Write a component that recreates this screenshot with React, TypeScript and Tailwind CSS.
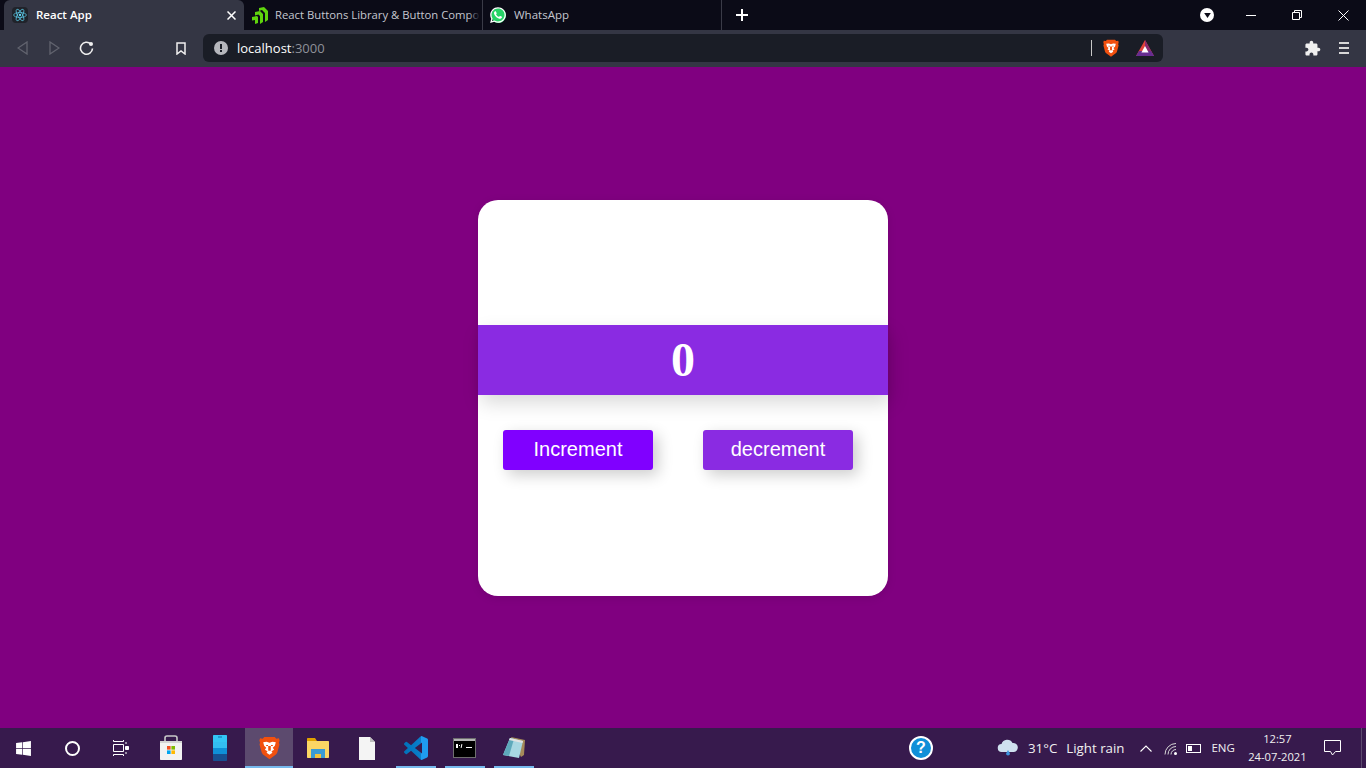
import { FaWhatsapp, FaWindows } from 'react-icons/fa';

const BraveIcon = ({ size = 18 }: { size?: number }) => (
  <svg width={size} height={size * 1.15} viewBox="0 0 20 23">
    <path d="M5 1h10l1.500 1.600L19 2.200l.6 2-.6 2.300.5 1.600-2 7.400c-.4 1.200-1 1.900-2 2.600L10 22.200 4.500 18.100c-1-.7-1.600-1.400-2-2.600l-2-7.400.5-1.600L.4 4.200l.6-2 2.500.4z" fill="#f1500f" />
    <path d="M4 6l3.200-.5L10 6.500l2.800-1L16 6l-.9 3.400-2 1.700 1.300 2.100-2.500 1.300.9 1.500L10 17.800l-2.800-1.800.9-1.500-2.500-1.300 1.300-2.100-2-1.700z" fill="#fff" />
    <path d="M8.800 9.500h2.400v4.500H8.800z" fill="#f1500f" />
    <path d="M6.800 8.500h1.800v1H6.800zM11.400 8.500h1.800v1h-1.800z" fill="#f1500f" />
  </svg>
);

const BatIcon = () => (
  <svg width="18" height="16" viewBox="0 0 18 16">
    <path d="M9 0l9 16H0z" fill="#e0423a" />
    <path d="M9 0l9 16H9z" fill="#8a2a6e" />
    <path d="M0 16l3-5h12l3 5z" fill="#662d91" />
    <path d="M9 6l3.600 6.500H5.400z" fill="#fff" />
  </svg>
);

const ReactIcon = () => (
  <div className="flex h-4 w-4 items-center justify-center rounded-sm bg-[#20232a]">
    <svg width="14" height="14" viewBox="-12 -12 24 24" fill="none" stroke="#61dafb" strokeWidth="1.100">
      <circle r="2" fill="#61dafb" stroke="none" />
      <ellipse rx="11" ry="4.200" />
      <ellipse rx="11" ry="4.200" transform="rotate(60)" />
      <ellipse rx="11" ry="4.200" transform="rotate(120)" />
    </svg>
  </div>
);

const ButtonsLibIcon = () => (
  <svg width="16" height="17" viewBox="0 0 16 17" fill="#5fd40d">
    <path d="M7 1l5-1 4 4v9l-3 2V6l-3-3-3 1z" />
    <path d="M3 5l5-1 3 3v8l-3 2V9L6.500 7.500 3 8.500z" />
    <path d="M0 10l5-1 1 1v6l-3 1v-4l-3 .5z" />
  </svg>
);

const WhatsappIcon = () => (
  <div className="relative flex h-[18px] w-[18px] items-center justify-center">
    <div className="absolute h-[15px] w-[15px] rounded-full bg-[#25d366]" />
    <FaWhatsapp className="relative text-[18px] text-white" />
  </div>
);

const StoreIcon = () => (
  <svg width="24" height="26" viewBox="0 0 24 26">
    <path d="M6 6V3c0-1 1-2 2-2h8c1 0 2 1 2 2v3" fill="none" stroke="#c9c9c9" strokeWidth="1.600" />
    <path d="M1 6h22v18c0 .6-.4 1-1 1H2c-.6 0-1-.4-1-1z" fill="#f2f2f2" />
    <path d="M1 6h22v2H1z" fill="#d4d4d4" />
    <path d="M8 11h3.600v3.600H8z" fill="#f25022" />
    <path d="M12.400 11H16v3.600h-3.600z" fill="#7fba00" />
    <path d="M8 15.400h3.600V19H8z" fill="#00a4ef" />
    <path d="M12.400 15.400H16V19h-3.600z" fill="#ffb900" />
  </svg>
);

const PhoneIcon = () => (
  <svg width="14" height="26" viewBox="0 0 14 26">
    <path d="M1 0h12c.6 0 1 .4 1 1v6H0V1c0-.6.4-1 1-1z" fill="#33c5f5" />
    <path d="M0 7h14v6H0z" fill="#33bdf2" />
    <path d="M0 13h14v6H0z" fill="#0f8fd8" />
    <path d="M0 19h14v6c0 .6-.4 1-1 1H1c-.6 0-1-.4-1-1z" fill="#174f92" />
    <path d="M5 1.500h4v1H5z" fill="#0b6ea8" />
  </svg>
);

const ExplorerIcon = () => (
  <svg width="22" height="20" viewBox="0 0 22 20">
    <path d="M0 1c0-.6.4-1 1-1h7l2 3H0z" fill="#e0a100" />
    <path d="M0 3h21c.6 0 1 .4 1 1v15c0 .6-.4 1-1 1H1c-.6 0-1-.4-1-1z" fill="#fcd664" />
    <path d="M4 11h14v9h-4v-4H8v4H4z" fill="#3b9bd4" />
    <path d="M8 16h6v4H8z" fill="#f5c33b" />
  </svg>
);

const FileIcon = () => (
  <svg width="16" height="23" viewBox="0 0 16 23">
    <path d="M0 0h11l5 5v18H0z" fill="#f4f4f4" />
    <path d="M11 0l5 5h-5z" fill="#bdbdbd" />
  </svg>
);

const VscodeIcon = () => (
  <svg width="24" height="24" viewBox="0 0 24 24">
    <defs>
      <linearGradient id="vscode-fill" x1="0" x2="1" y1="0" y2="0">
        <stop offset="0" stopColor="#0072ba" />
        <stop offset="0.7" stopColor="#0a7fcb" />
        <stop offset="0.72" stopColor="#1f9cf0" />
        <stop offset="1" stopColor="#1f9cf0" />
      </linearGradient>
    </defs>
    <path
      d="M23.150 2.587L18.210.21a1.494 1.494 0 0 0-1.705.29l-9.460 8.630-4.120-3.128a.999.999 0 0 0-1.276.057L.327 7.261A1 1 0 0 0 .326 8.740L3.899 12 .326 15.260a1 1 0 0 0 .001 1.479L1.650 17.940a.999.999 0 0 0 1.276.057l4.120-3.128 9.460 8.630a1.492 1.492 0 0 0 1.704.29l4.942-2.377A1.500 1.500 0 0 0 24 20.060V3.939a1.500 1.500 0 0 0-.85-1.352zm-5.146 14.861L10.826 12l7.178-5.448v10.896z"
      fill="url(#vscode-fill)"
    />
  </svg>
);

const CmdIcon = () => (
  <div className="flex h-[20px] w-[23px] flex-col border border-[#6e6e6e] bg-black">
    <div className="h-[2px] bg-[#b5b5b5]" />
    <div className="mt-[2px] flex items-center gap-[1px] pl-[2px]">
      <div className="h-[4px] w-[2px] bg-white" />
      <div className="h-[1px] w-[1px] bg-white" />
      <div className="h-[4px] w-[1px] rotate-12 bg-white" />
      <div className="mt-[4px] ml-[3px] h-[1px] w-[6px] bg-white" />
    </div>
  </div>
);

const NotepadIcon = () => (
  <svg width="24" height="24" viewBox="0 0 24 24">
    <path d="M9 1l14 3-1 15-3 2z" fill="#a58a5a" />
    <path d="M8 2l13 3-4 17L1 19z" fill="#a8d7e2" />
    <path d="M1 19L8 2l4 1-5 17z" fill="#5ea9bb" />
    <path d="M8 2l13 3-.5 2L7 4z" fill="#e2e2e2" />
  </svg>
);

const tabFont = "font-['Open_Sans','Liberation_Sans',sans-serif] leading-none";

const TabBar = () => (
  <div className="flex h-[30px] items-end bg-[#0b0b17] pl-[4px]">
    <div className="flex h-[30px] w-[240px] items-center rounded-t-md bg-[#343644] pl-[8px]">
      <ReactIcon />
      <span className={`${tabFont} ml-[8px] text-[11.500px] font-semibold text-white`}>React App</span>
      <svg className="mr-[8px] ml-auto" width="9" height="9" viewBox="0 0 9 9" stroke="#fff" strokeWidth="1.500">
        <path d="M.5.500l8 8M8.500.500l-8 8" />
      </svg>
    </div>
    <div className="flex h-[30px] w-[239px] items-center border-r border-[#3a3b47] pl-[8px]">
      <ButtonsLibIcon />
      <div className="relative ml-[7px] flex w-[205px] items-center whitespace-nowrap">
        <span className={`${tabFont} text-[11.300px] text-[#c5c7cf]`}>React Buttons Library &amp; Button Compo</span>
        <div className="absolute inset-y-0 right-0 w-[12px] bg-gradient-to-r from-transparent to-[#0b0b17]" />
      </div>
    </div>
    <div className="flex h-[30px] w-[239px] items-center border-r border-[#3a3b47] pl-[6px]">
      <WhatsappIcon />
      <span className={`${tabFont} ml-[7px] text-[11.500px] text-[#c5c7cf]`}>WhatsApp</span>
    </div>
    <svg className="mb-[9px] ml-[14px]" width="12" height="12" viewBox="0 0 12 12" stroke="#fff" strokeWidth="2">
      <path d="M6 0v12M0 6h12" />
    </svg>
    <div className="ml-auto flex h-[30px] items-center">
      <div className="flex w-[42px] items-center justify-center">
        <div className="flex h-[14px] w-[14px] items-center justify-center rounded-full bg-white">
          <svg width="7" height="5" viewBox="0 0 8 6" fill="#0b0b17">
            <path d="M0 0h8L4 6z" />
          </svg>
        </div>
      </div>
      <div className="flex w-[46px] justify-center">
        <div className="h-px w-[10px] bg-white" />
      </div>
      <div className="flex w-[46px] justify-center">
        <svg width="10" height="10" viewBox="0 0 10 10" fill="none" stroke="#fff">
          <path d="M.5 2.500h7v7h-7zM2.500 2.500v-2h7v7h-2" />
        </svg>
      </div>
      <div className="flex w-[46px] justify-center">
        <svg width="11" height="11" viewBox="0 0 11 11" stroke="#fff">
          <path d="M.5.500l10 10M10.500.500l-10 10" />
        </svg>
      </div>
    </div>
  </div>
);

const Toolbar = () => (
  <div className="flex h-[37px] items-center bg-[#343644] pb-[1px] pl-[6px] pr-[6px]">
    <div className="flex w-[32px] justify-center">
      <svg width="11" height="14" viewBox="0 0 11 14" fill="none" stroke="#62646f" strokeWidth="1.300">
        <path d="M10 1v12L1 7z" />
      </svg>
    </div>
    <div className="flex w-[32px] justify-center">
      <svg width="11" height="14" viewBox="0 0 11 14" fill="none" stroke="#62646f" strokeWidth="1.300">
        <path d="M1 1v12l9-6z" />
      </svg>
    </div>
    <div className="flex w-[32px] justify-center">
      <svg width="15" height="15" viewBox="0 0 15 15" fill="none" stroke="#f0f0f0" strokeWidth="1.600">
        <path d="M11.800 3a6 6 0 1 0 1.700 4.500" />
        <circle cx="12" cy="3" r="2" fill="#f0f0f0" stroke="none" />
      </svg>
    </div>
    <div className="ml-[63px] flex w-[32px] justify-center">
      <svg width="10" height="13" viewBox="0 0 10 13" fill="none" stroke="#f0f0f0" strokeWidth="1.500">
        <path d="M1 1h8v11L5 9l-4 3z" />
      </svg>
    </div>
    <div className="ml-[6px] flex h-[28px] w-[960px] items-center rounded-md bg-[#1a1d26] pl-[11px]">
      <div className="flex h-[14px] w-[14px] items-center justify-center rounded-full bg-[#b6b7bd]">
        <div className="flex flex-col items-center gap-[1px]">
          <div className="h-[5px] w-[2px] bg-[#1a1d26]" />
          <div className="h-[2px] w-[2px] bg-[#1a1d26]" />
        </div>
      </div>
      <span className="ml-[9px] font-['Open_Sans','Liberation_Sans',sans-serif] text-[13px] leading-none text-white">
        localhost<span className="text-[#8f9199]">:3000</span>
      </span>
      <div className="ml-auto h-[16px] w-px bg-[#c8c8c8]" />
      <div className="ml-[10px] flex w-[18px] justify-center">
        <BraveIcon size={16} />
      </div>
      <div className="mr-[9px] ml-[16px] flex w-[18px] justify-center">
        <BatIcon />
      </div>
    </div>
    <div className="ml-auto flex w-[32px] justify-center">
      <svg width="17" height="17" viewBox="0 0 24 24" fill="#f0f0f0">
        <path d="M20.500 11H19V7c0-1.100-.9-2-2-2h-4V3.500C13 2.120 11.880 1 10.500 1S8 2.120 8 3.500V5H4c-1.100 0-1.990.9-1.990 2v3.800H3.500c1.490 0 2.700 1.210 2.700 2.700s-1.210 2.700-2.700 2.700H2V20c0 1.100.9 2 2 2h3.800v-1.500c0-1.490 1.210-2.700 2.700-2.700 1.490 0 2.700 1.210 2.700 2.700V22H17c1.100 0 2-.9 2-2v-4h1.500c1.380 0 2.500-1.120 2.500-2.500S21.880 11 20.500 11z" />
      </svg>
    </div>
    <div className="flex w-[32px] flex-col items-center gap-[3px]">
      <div className="h-[2px] w-[10px] bg-[#d8d8d8]" />
      <div className="h-[2px] w-[10px] bg-[#d8d8d8]" />
      <div className="h-[2px] w-[10px] bg-[#d8d8d8]" />
    </div>
  </div>
);

const Counter = () => (
  <main className="flex flex-1 justify-center bg-[#800080] pt-[133px]">
    <div className="flex h-[396px] w-[410px] flex-col rounded-[20px] bg-white pt-[125px] shadow-[0_2px_10px_rgba(0,0,0,0.1)]">
      <div className="flex h-[70px] items-center justify-center bg-[#8a2be2] shadow-[3px_8px_18px_rgba(0,0,0,0.15)]">
        <span className="font-['Liberation_Serif',serif] text-[48px] leading-none font-bold text-white">0</span>
      </div>
      <div className="mt-[35px] flex gap-[50px] pl-[25px]">
        <button className="h-[40px] w-[150px] rounded-[3px] bg-[#8000ff] pb-[2px] font-['Liberation_Sans',sans-serif] text-[20px] text-white shadow-[5px_5px_15px_rgba(0,0,0,0.2)]">
          Increment
        </button>
        <button className="h-[40px] w-[150px] rounded-[3px] bg-[#8a2be2] pb-[2px] font-['Liberation_Sans',sans-serif] text-[20px] text-white shadow-[5px_5px_15px_rgba(0,0,0,0.2)]">
          decrement
        </button>
      </div>
    </div>
  </main>
);

const TaskbarItem = ({
  children,
  bar,
  active,
  pad = 'pr-[2px]'
}: {
  children?: React.ReactNode;
  bar?: boolean;
  active?: boolean;
  pad?: string;
}) => (
  <div
    className={`relative flex h-[40px] items-center justify-center ${pad} ${
      active ? 'mr-px w-[48px] bg-[#5c4a6e]' : 'w-[49px]'
    }`}
  >
    {children}
    {(bar || active) && (
      <div className={`absolute bottom-0 h-[2px] bg-[#76b9ed] ${active ? 'inset-x-0' : 'right-[5px] left-[4px]'}`} />
    )}
  </div>
);

const trayText = "font-['Open_Sans','Liberation_Sans',sans-serif] text-[#f0f0f0] leading-none";

const Taskbar = () => (
  <div className="flex h-[40px] items-center bg-[#371a4d]">
    <TaskbarItem>
      <FaWindows className="text-[17px] text-white" />
    </TaskbarItem>
    <TaskbarItem pad="pr-[3px]">
      <div className="h-[15px] w-[15px] rounded-full border-2 border-white" />
    </TaskbarItem>
    <TaskbarItem pad="pr-[4px]">
      <svg width="16" height="16" viewBox="0 0 16 16" fill="none" stroke="#fff">
        <path d="M.5 0v1.500h10V0M.5 16v-1.500h10V16M.5 4.500h10v7H.5z" />
        <path d="M13 2v2M13 12v2" />
        <path d="M12.500 6.500h3v3h-3z" fill="#fff" />
      </svg>
    </TaskbarItem>
    <TaskbarItem>
      <StoreIcon />
    </TaskbarItem>
    <TaskbarItem>
      <PhoneIcon />
    </TaskbarItem>
    <TaskbarItem active pad="pr-0">
      <BraveIcon size={21} />
    </TaskbarItem>
    <TaskbarItem>
      <ExplorerIcon />
    </TaskbarItem>
    <TaskbarItem>
      <FileIcon />
    </TaskbarItem>
    <TaskbarItem bar>
      <VscodeIcon />
    </TaskbarItem>
    <TaskbarItem bar>
      <CmdIcon />
    </TaskbarItem>
    <TaskbarItem bar>
      <NotepadIcon />
    </TaskbarItem>

    <div className="ml-[370px] flex h-[24px] w-[24px] items-center justify-center rounded-full border-2 border-white bg-[#0f8fd8]">
      <span className="font-['Liberation_Sans',sans-serif] text-[16px] leading-none font-bold text-white">?</span>
    </div>

    <svg className="ml-[64px]" width="22" height="18" viewBox="0 0 22 18">
      <path d="M5 13a4 4 0 0 1-.5-8A6 6 0 0 1 15.500 4 4.500 4.500 0 0 1 17 13z" fill="#cfe0ee" />
      <path d="M11 11l2 3.500a2 2 0 1 1-4 0z" fill="#3f95e0" />
    </svg>
    <span className={`${trayText} mt-[1px] ml-[9px] text-[13.300px]`}>31°C</span>
    <span className={`${trayText} mt-[1px] ml-[9px] text-[13.300px]`}>Light rain</span>

    <svg className="ml-[16px]" width="12" height="7" viewBox="0 0 12 7" fill="none" stroke="#fff" strokeWidth="1.100">
      <path d="M.5 6.500L6 1l5.500 5.500" />
    </svg>
    <svg className="ml-[12px]" width="14" height="13" viewBox="0 0 14 13" fill="none" stroke="#d8d8d8">
      <path d="M1 12.500A11 11 0 0 1 12 1.500M4 12.500A8 8 0 0 1 12 4.500M7 12.500A5 5 0 0 1 12 7.500" />
      <circle cx="11.500" cy="11.500" r="1.500" fill="#fff" stroke="none" />
    </svg>
    <div className="ml-[8px] flex h-[9px] w-[15px] items-center border border-white pl-[1px]">
      <div className="h-[5px] w-[4px] bg-white" />
    </div>
    <span className={`${trayText} ml-[10px] text-[11.500px]`}>ENG</span>

    <div className="ml-[13px] flex w-[59px] flex-col items-center gap-[7px]">
      <span className={`${trayText} -mt-[1px] text-[11.200px]`}>12:57</span>
      <span className={`${trayText} text-[11.200px] whitespace-nowrap`}>24-07-2021</span>
    </div>

    <svg className="ml-[17px]" width="17" height="16" viewBox="0 0 17 16" fill="none" stroke="#fff">
      <path d="M.5.500h16v11h-5L8.500 15l-2-3.500h-6z" />
    </svg>
    <div className="mr-[4px] ml-auto h-[40px] w-px bg-[#5c4a6e]" />
  </div>
);

export default function App() {
  return (
    <div className="flex h-[768px] w-[1366px] flex-col overflow-hidden">
      <TabBar />
      <Toolbar />
      <Counter />
      <Taskbar />
    </div>
  );
}
